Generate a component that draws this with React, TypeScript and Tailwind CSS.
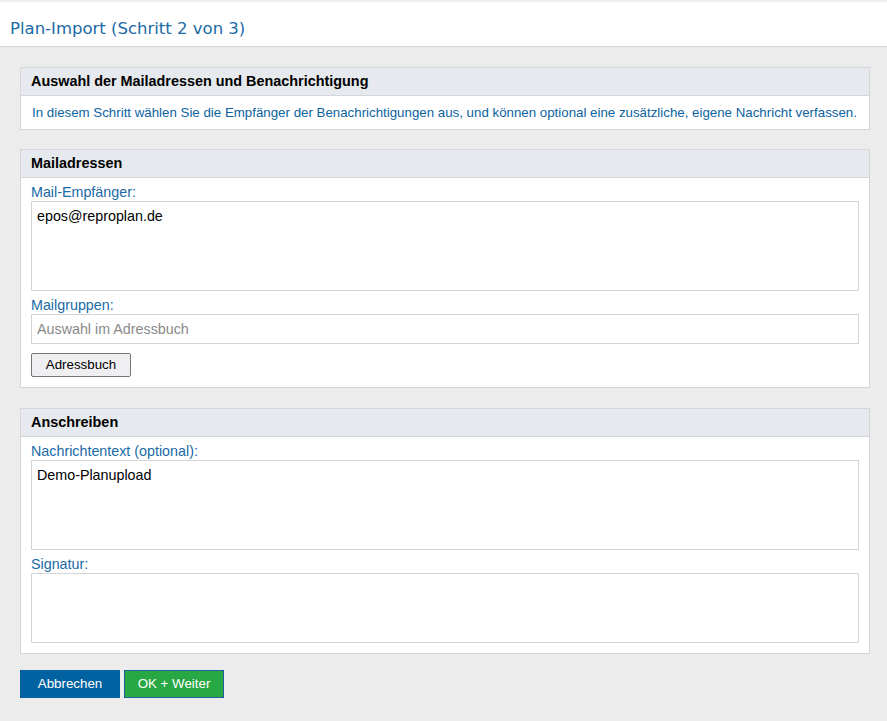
import React from 'react';

const Panel: React.FC<{ title: string; className?: string; children: React.ReactNode }> = ({ title, className, children }) => (
  <div className={`w-[850px] border border-[#d4d6d9] bg-white ${className ?? ''}`}>
    <div className="h-[28px] flex items-center px-[10px] bg-[#e6e9ed] border-b border-[#d4d6d9] text-[14.4px] font-bold text-black">
      {title}
    </div>
    {children}
  </div>
);

const Label: React.FC<{ children: React.ReactNode }> = ({ children }) => (
  <div className="text-[14.3px] leading-[18px] text-[#1a6aa5] mt-[5px]">{children}</div>
);

const App: React.FC = () => {
  return (
    <div className="min-h-[721px] bg-[#ececec]" style={{ fontFamily: '"Liberation Sans", Arial, sans-serif' }}>
      <div className="h-[47px] bg-white border-b border-[#d6d6d6] shadow-[inset_0_3px_3px_-2px_rgba(0,0,0,0.12)] flex items-center px-[10px]">
        <h1 className="text-[16.5px] text-[#1a6aa5] pt-[13px]" style={{ fontFamily: '"DejaVu Sans", Verdana, sans-serif' }}>
          Plan-Import (Schritt 2 von 3)
        </h1>
      </div>

      <div className="pl-[20px] pt-[20px] flex flex-col">
        <Panel title="Auswahl der Mailadressen und Benachrichtigung">
          <div className="h-[33px] flex items-center pl-[11px] whitespace-nowrap overflow-hidden text-[13.3px] text-[#0b63a1]">
            In diesem Schritt wählen Sie die Empfänger der Benachrichtigungen aus, und können optional eine zusätzliche, eigene Nachricht verfassen.
          </div>
        </Panel>

        <Panel title="Mailadressen" className="mt-[19px]">
          <div className="px-[10px] pb-[10px]">
            <Label>Mail-Empfänger:</Label>
            <textarea
              defaultValue="epos@reproplan.de"
              className="block w-full h-[90px] border border-[#d4d4d4] px-[5px] py-[4px] text-[14.3px] text-black resize-none outline-none"
            />
            <Label>Mailgruppen:</Label>
            <input
              placeholder="Auswahl im Adressbuch"
              className="block w-full h-[30px] border border-[#d4d4d4] px-[5px] text-[14.3px] text-black placeholder:text-[#8a8a8a] outline-none"
            />
            <button className="mt-[9px] w-[100px] h-[24px] border border-[#767676] bg-[#efeff2] rounded-[2px] text-[13.33px] text-black">
              Adressbuch
            </button>
          </div>
        </Panel>

        <Panel title="Anschreiben" className="mt-[20px]">
          <div className="px-[10px] pb-[10px]">
            <Label>Nachrichtentext (optional):</Label>
            <textarea
              defaultValue="Demo-Planupload"
              className="block w-full h-[90px] border border-[#d4d4d4] px-[5px] py-[4px] text-[14.3px] text-black resize-none outline-none"
            />
            <Label>Signatur:</Label>
            <textarea className="block w-full h-[70px] border border-[#d4d4d4] px-[5px] py-[4px] text-[14.3px] text-black resize-none outline-none" />
          </div>
        </Panel>

        <div className="flex gap-[4px] pb-[20px] mt-[16px]">
          <button className="w-[100px] h-[28px] bg-[#0062a0] text-white text-[13.33px]">Abbrechen</button>
          <button className="w-[100px] h-[28px] bg-[#28a745] border border-[#1f5f9e] text-white text-[13.33px]">OK + Weiter</button>
        </div>
      </div>
    </div>
  );
};

export default App;
